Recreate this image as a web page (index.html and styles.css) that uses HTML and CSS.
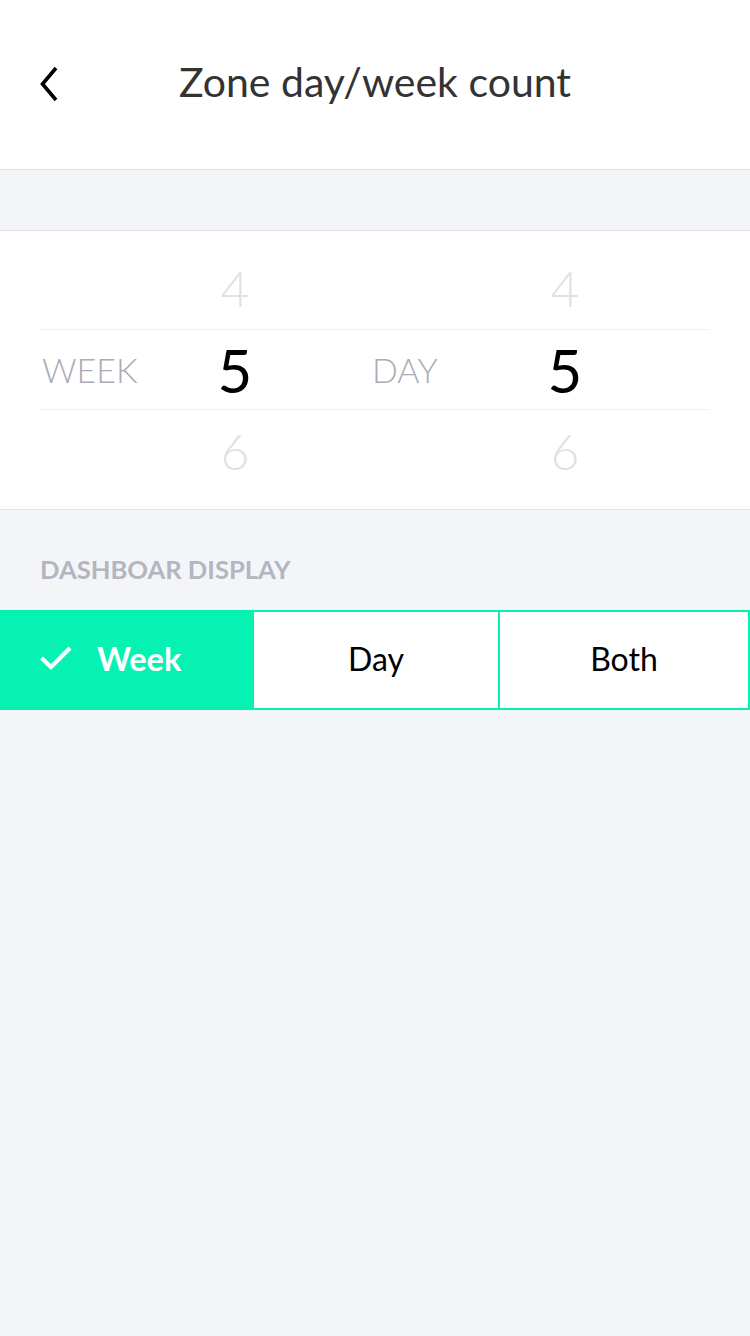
FILE: index.html
```html
<!DOCTYPE html>
<html>
<head>
<meta charset="utf-8">
<link rel="stylesheet" href="styles.css">
</head>
<body>
<div class="app">
  <header class="header">
    <button class="back" aria-label="Back">
      <svg width="20" height="36" viewBox="0 0 20 36"><path d="M17 2 L3.5 18 L17 34" fill="none" stroke="#000" stroke-width="3.6" stroke-linecap="butt" stroke-linejoin="miter"/></svg>
    </button>
    <h1 class="title">Zone day/week count</h1>
  </header>
  <div class="spacer"></div>
  <section class="picker">
    <div class="prow above">
      <span class="plabel"></span><span class="pnum dim">4</span><span></span>
      <span class="plabel"></span><span class="pnum dim">4</span><span></span>
    </div>
    <div class="prow selected">
      <span class="plabel">WEEK</span><span class="pnum cur">5</span><span></span>
      <span class="plabel">DAY</span><span class="pnum cur">5</span><span></span>
    </div>
    <div class="prow below">
      <span class="plabel"></span><span class="pnum dim">6</span><span></span>
      <span class="plabel"></span><span class="pnum dim">6</span><span></span>
    </div>
  </section>
  <section class="display">
    <div class="section-label">DASHBOAR DISPLAY</div>
    <div class="seg">
      <div class="opt active">
        <svg class="check" width="34" height="26" viewBox="0 0 34 26"><path d="M2.5 13 L12 22 L31 3" fill="none" stroke="#fff" stroke-width="4.2"/></svg>
        <span>Week</span>
      </div>
      <div class="opt mid">Day</div>
      <div class="opt last">Both</div>
    </div>
  </section>
</div>
</body>
</html>
```
FILE: styles.css
```css
* { box-sizing: border-box; }
html, body { margin: 0; padding: 0; }
body {
  width: 750px;
  height: 1336px;
  background: #f4f5f9;
  font-family: Lato, "Open Sans", sans-serif;
  overflow: hidden;
}
.app { width: 750px; min-height: 1336px; background: #f4f5f9; }
.header {
  height: 170px;
  background: #fff;
  border-bottom: 1px solid #e2e5e8;
  display: flex;
  align-items: center;
  justify-content: center;
  position: relative;
}
.back {
  position: absolute;
  left: 39px;
  top: 66px;
  background: none;
  border: 0;
  padding: 0;
  width: 20px;
  height: 36px;
}
.back svg { display: block; }
.title {
  margin: 0 0 6px 0;
  font-size: 41px;
  font-weight: 400;
  color: #333333;
  letter-spacing: 0;
}
.spacer {
  height: 61px;
  border-bottom: 1px solid #e2e5e8;
}
.picker {
  background: #fff;
  border-bottom: 1px solid #e2e5e8;
  padding: 19px 40px 20px 40px;
}
.prow {
  display: grid;
  grid-template-columns: 155px 80px 95px 155px 80px 1fr;
  height: 79px;
  align-items: center;
}
.prow.selected {
  height: 81px;
  border-top: 1px solid #eff0f2;
  border-bottom: 1px solid #eff0f2;
}
.plabel {
  font-size: 34px;
  font-weight: 300;
  color: #a9acb8;
  padding-left: 2px;
}
.pnum {
  text-align: center;
  line-height: 1;
}
.pnum.dim { font-size: 50px; font-weight: 300; color: #dfe2e4; }
.above .pnum.dim { margin-top: -3px; }
.below .pnum.dim { margin-top: 3px; }
.pnum.cur { font-size: 60px; font-weight: 400; color: #000; }
.display { padding-top: 44px; }
.section-label {
  padding-left: 40px;
  font-size: 25.6px;
  line-height: 30px;
  font-weight: 700;
  color: #b3b5c0;
  height: 30px;
  margin-bottom: 26px;
}
.seg {
  display: grid;
  grid-template-columns: 254px 246px 250px;
  height: 100px;
  border-top: 2px solid #06f2b2;
  border-bottom: 2px solid #06f2b2;
  background: #fff;
}
.opt {
  display: flex;
  align-items: center;
  justify-content: center;
  font-size: 32px;
  color: #000;
  font-weight: 400;
  padding-bottom: 4px;
}
.opt.active {
  background: #06f2b2;
  color: #fff;
  font-weight: 700;
  justify-content: flex-start;
  padding-left: 39px;
  gap: 24px;
  font-size: 32.5px;
}
.check { display: block; margin-top: 0; }
.opt.mid { border-right: 2px solid #06f2b2; }
.opt.last { border-right: 2px solid #06f2b2; }
```
